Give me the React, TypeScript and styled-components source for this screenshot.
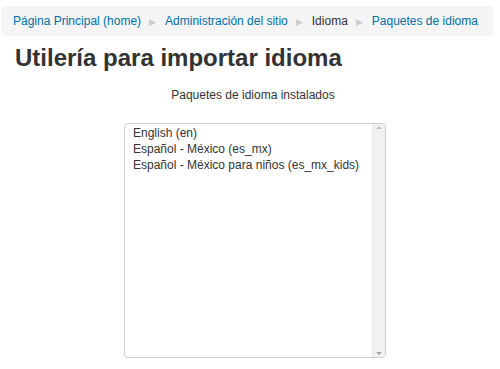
import { createGlobalStyle, styled } from "styled-components";

const GlobalStyle = createGlobalStyle`
  html, body {
    margin: 0;
    padding: 0;
    background: #fff;
    font-family: "Liberation Sans", Arial, sans-serif;
    color: #333;
  }
`;

const Page = styled.div`
  width: 500px;
  height: 369px;
  overflow: hidden;
  padding: 6px 7px 0 1px;
  box-sizing: border-box;
`;

const Breadcrumb = styled.nav`
  display: flex;
  align-items: center;
  height: 30px;
  padding: 0 12px;
  background: #f5f5f5;
  border-radius: 4px;
  font-size: 12px;
  white-space: nowrap;
`;

const Crumb = styled.a<{ $current?: boolean }>`
  color: ${(p) => (p.$current ? "#333" : "#0070a8")};
  text-decoration: none;
`;

const Divider = styled.span`
  color: #ccc;
  font-size: 9px;
  padding: 0 9px 0 8px;
`;

const Title = styled.h2`
  margin: 7px 0 0 14px;
  font-size: 24px;
  line-height: 30px;
  font-weight: bold;
  color: #333;
`;

const Caption = styled.div`
  margin-top: 15px;
  text-align: center;
  font-size: 12px;
  line-height: 15px;
  padding-left: 12px;
`;

const ListBox = styled.div`
  display: flex;
  width: 262px;
  height: 235px;
  margin: 20px 0 0 123px;
  border: 1px solid #ccc;
  border-radius: 4px;
  box-sizing: border-box;
  overflow: hidden;
`;

const Options = styled.ul`
  flex: 1;
  list-style: none;
  margin: 0;
  padding: 1px 0 0 8px;
  font-size: 12px;
  line-height: 16px;
  white-space: nowrap;
`;

const Scrollbar = styled.div`
  width: 12px;
  display: flex;
  flex-direction: column;
  justify-content: space-between;
  align-items: center;
  background: #f1f1f1;
  border-left: 1px solid #e8e8e8;
  padding: 2px 0;
`;

const Arrow = styled.span<{ $down?: boolean }>`
  width: 0;
  height: 0;
  border-left: 3px solid transparent;
  border-right: 3px solid transparent;
  ${(p) =>
    p.$down
      ? "border-top: 3px solid #a3a3a3;"
      : "border-bottom: 3px solid #c3c3c3;"}
`;

const crumbs = [
  { label: "Página Principal (home)" },
  { label: "Administración del sitio" },
  { label: "Idioma", current: true },
  { label: "Paquetes de idioma" },
];

const packs = [
  "English (en)",
  "Español - México (es_mx)",
  "Español - México para niños (es_mx_kids)",
];

const App = () => {
  return (
    <>
      <GlobalStyle />
      <Page>
        <Breadcrumb>
          {crumbs.map((c, i) => (
            <span key={c.label}>
              {i > 0 && <Divider>▶</Divider>}
              <Crumb href="#" $current={c.current}>
                {c.label}
              </Crumb>
            </span>
          ))}
        </Breadcrumb>
        <Title>Utilería para importar idioma</Title>
        <Caption>Paquetes de idioma instalados</Caption>
        <ListBox>
          <Options>
            {packs.map((p) => (
              <li key={p}>{p}</li>
            ))}
          </Options>
          <Scrollbar>
            <Arrow />
            <Arrow $down />
          </Scrollbar>
        </ListBox>
      </Page>
    </>
  );
};

export default App;
